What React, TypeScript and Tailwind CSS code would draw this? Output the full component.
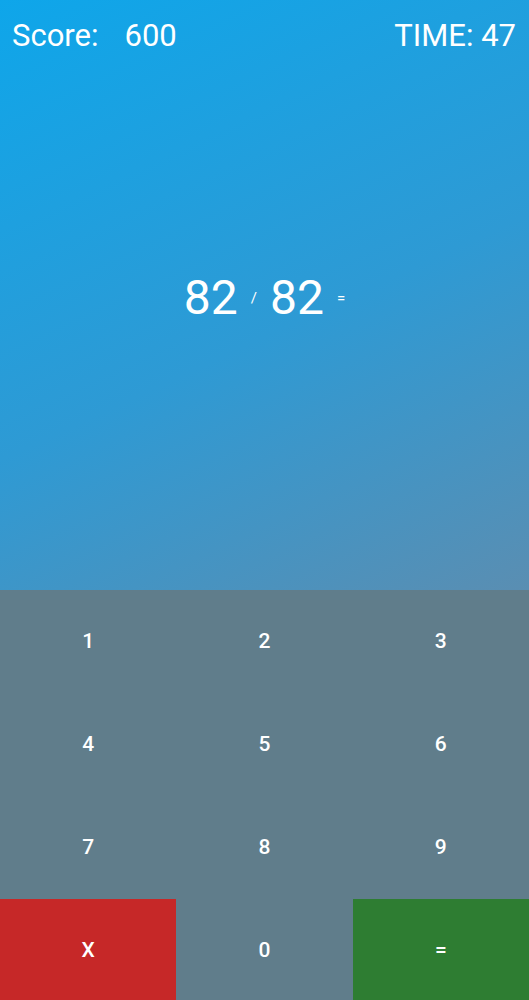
import React from 'react';

const keys: { label: string; tone: 'plain' | 'clear' | 'submit' }[] = [
  { label: '1', tone: 'plain' },
  { label: '2', tone: 'plain' },
  { label: '3', tone: 'plain' },
  { label: '4', tone: 'plain' },
  { label: '5', tone: 'plain' },
  { label: '6', tone: 'plain' },
  { label: '7', tone: 'plain' },
  { label: '8', tone: 'plain' },
  { label: '9', tone: 'plain' },
  { label: 'X', tone: 'clear' },
  { label: '0', tone: 'plain' },
  { label: '=', tone: 'submit' },
];

const toneClass = {
  plain: 'bg-[#607d8b]',
  clear: 'bg-[#c62828]',
  submit: 'bg-[#2e7d32]',
};

export default function App() {
  return (
    <div className="h-[1000px] w-full overflow-hidden flex flex-col text-white font-['Roboto',sans-serif]">
      <section className="h-[590px] shrink-0 grid grid-cols-1 grid-rows-1 bg-[linear-gradient(155deg,#0ea6ea_0%,#2e9ad4_55%,#5a8eb2_100%)]">
        <header className="col-start-1 row-start-1 self-start flex justify-between items-center pl-3 pr-[13px] pt-5 text-[31px] leading-[31px]">
          <div>
            <span>Score:</span>
            <span className="ml-[26px]">600</span>
          </div>
          <div>TIME: 47</div>
        </header>
        <div className="col-start-1 row-start-1 self-center flex items-center justify-center pt-[6px]">
          <span className="text-[48px] leading-none">82</span>
          <span className="text-[15px] leading-none mx-[13px]">/</span>
          <span className="text-[48px] leading-none">82</span>
          <span className="text-[15px] leading-none ml-[13px]">=</span>
        </div>
      </section>
      <div className="grid grid-cols-3 auto-rows-[103px] shrink-0 bg-[#607d8b]">
        {keys.map((k) => (
          <button
            key={k.label}
            className={`${toneClass[k.tone]} flex items-center justify-center text-[21px] font-medium`}
          >
            {k.label}
          </button>
        ))}
      </div>
    </div>
  );
}
